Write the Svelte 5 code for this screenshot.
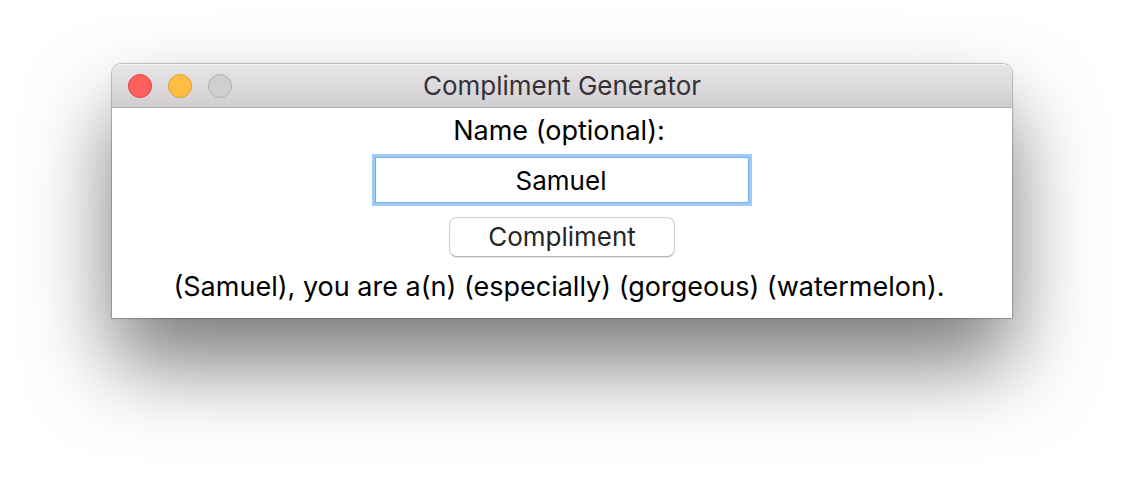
<script>
  let name = $state('Samuel');
  let message = $state('(Samuel), you are a(n) (especially) (gorgeous) (watermelon).');

  function compliment() {
    const who = name.trim();
    message = `${who ? `(${who}), you` : 'You'} are a(n) (especially) (gorgeous) (watermelon).`;
  }
</script>

<main class="desktop">
  <section class="window" aria-labelledby="window-title">
    <header class="titlebar">
      <div class="controls">
        <button class="light close" type="button" aria-label="Close"></button>
        <button class="light minimize" type="button" aria-label="Minimize"></button>
        <button class="light zoom" type="button" aria-label="Zoom" disabled></button>
      </div>
      <h1 id="window-title">Compliment Generator</h1>
    </header>
    <div class="content">
      <label for="name">Name (optional):</label>
      <input id="name" type="text" bind:value={name} />
      <button class="push" type="button" onclick={compliment}>Compliment</button>
      <output for="name">{message}</output>
    </div>
  </section>
</main>

<style>
  :global(body) {
    margin: 0;
    background: #fff;
  }

  .desktop {
    box-sizing: border-box;
    min-height: 100vh;
    padding: 64px 112px 160px;
    overflow: hidden;
    font-family: Inter, "Open Sans", sans-serif;
    font-size: 26px;
    color: #000;
  }

  .window {
    border-radius: 10px 10px 0 0;
    background: #fff;
    box-shadow:
      0 0 1px 1px rgba(0, 0, 0, 0.24),
      0 46px 84px rgba(0, 0, 0, 0.52);
  }

  .titlebar {
    box-sizing: border-box;
    display: grid;
    grid-template-columns: 1fr auto 1fr;
    align-items: center;
    height: 44px;
    padding: 0 16px;
    border-bottom: 1px solid #b0aeb0;
    border-radius: 10px 10px 0 0;
    background: linear-gradient(#e8e6e9, #d1ced1);
    box-shadow: inset 0 1px #f5f4f5;
  }

  .controls {
    display: flex;
    gap: 16px;
  }

  .light {
    box-sizing: border-box;
    width: 24px;
    height: 24px;
    padding: 0;
    border: 1px solid;
    border-radius: 50%;
  }

  .close {
    border-color: #e0443f;
    background: #fe605c;
  }

  .minimize {
    border-color: #de9f34;
    background: #ffbe41;
  }

  .zoom {
    border-color: #aeafae;
    background: #cfcfcf;
  }

  h1 {
    margin: 0;
    font-size: 26px;
    font-weight: 400;
    line-height: 32px;
    color: #343236;
  }

  .content {
    display: flex;
    flex-direction: column;
    align-items: center;
    padding: 5px 16px 14px;
  }

  label,
  output {
    padding-right: 6px;
    font-size: 27px;
    line-height: 35px;
    text-align: center;
  }

  input {
    box-sizing: border-box;
    width: 374px;
    max-width: 100%;
    height: 46px;
    margin: 9px 0 14px;
    padding: 0 10px 0 8px;
    border: 1px solid #7eaddb;
    outline: 3px solid #9dcbfb;
    background: #fff;
    font: inherit;
    color: inherit;
    text-align: center;
  }

  .push {
    box-sizing: border-box;
    width: 226px;
    height: 40px;
    margin-bottom: 12px;
    padding: 0;
    border: 1px solid #cfcfcf;
    border-bottom-color: #b8b8b8;
    border-radius: 8px;
    background: #fff;
    box-shadow: 0 1px 1px rgba(0, 0, 0, 0.12);
    font: inherit;
    line-height: 36px;
    color: #262626;
  }
</style>
